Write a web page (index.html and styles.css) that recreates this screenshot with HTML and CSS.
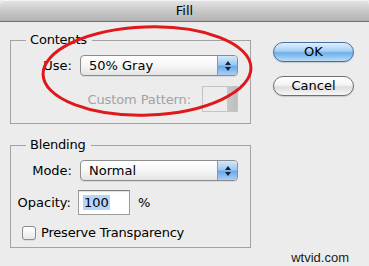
FILE: index.html
```html
<!DOCTYPE html>
<html>
<head>
<meta charset="utf-8">
<link rel="stylesheet" href="styles.css">
</head>
<body>
<div class="window">
  <div class="titlebar">Fill</div>
  <div class="content">
    <div class="groups">
      <fieldset class="group group-contents">
        <legend>Contents</legend>
        <div class="row">
          <span class="label">Use:</span>
          <div class="select"><span class="select-text">50% Gray</span><span class="select-arrows"><span class="up"></span><span class="down"></span></span></div>
        </div>
        <div class="row-pattern">
          <span class="disabled-label">Custom Pattern:</span>
          <div class="pattern-box"><span class="pattern-arrow"></span></div>
        </div>
      </fieldset>
      <fieldset class="group group-blending">
        <legend>Blending</legend>
        <div class="row">
          <span class="label">Mode:</span>
          <div class="select"><span class="select-text">Normal</span><span class="select-arrows"><span class="up"></span><span class="down"></span></span></div>
        </div>
        <div class="row row-opacity">
          <span class="label">Opacity:</span>
          <div class="input"><span class="selected">100</span></div>
          <span class="unit">%</span>
        </div>
        <div class="row-check">
          <span class="checkbox"></span>
          <span class="check-label">Preserve Transparency</span>
        </div>
      </fieldset>
    </div>
    <div class="buttons">
      <div class="btn btn-default">OK</div>
      <div class="btn">Cancel</div>
    </div>
  </div>
  <svg class="annotation" width="369" height="266" viewBox="0 0 369 266">
    <ellipse cx="147" cy="71" rx="104" ry="44" fill="none" stroke="#e0171b" stroke-width="3" transform="rotate(-2 147 71)"/>
  </svg>
  <div class="watermark">wtvid.com</div>
</div>
</body>
</html>
```

FILE: styles.css
```css
* { box-sizing: border-box; }
html, body {
  margin: 0;
  padding: 0;
  background: #ececec;
}
body {
  font-family: "DejaVu Sans", "Liberation Sans", sans-serif;
  font-size: 12px;
  color: #000;
}
.window {
  position: relative;
  width: 369px;
  height: 266px;
  overflow: hidden;
  background: #ececec;
}
.titlebar {
  height: 22px;
  line-height: 22px;
  text-align: center;
  font-size: 13px;
  background: linear-gradient(#e6e6e6, #c9c9c9 50%, #b4b4b4);
  border-bottom: 1px solid #6e6e6e;
  border-radius: 4px 4px 0 0;
  box-shadow: inset 0 1px 0 #f4f4f4;
}
.content {
  display: flex;
  padding: 10px 0 0 10px;
}
.groups {
  display: flex;
  flex-direction: column;
  gap: 13px;
  width: 241px;
}
.group {
  margin: 0;
  min-width: 0;
  border: 1px solid #a3a3a3;
  padding: 0 12px 0 0;
}
.group legend {
  margin-left: 15px;
  padding: 0 5px 0 4px;
  font-size: 13px;
  line-height: 16px;
  letter-spacing: -0.2px;
}
.group-contents { height: 92px; }
.group-blending { height: 111px; }
.row {
  display: grid;
  grid-template-columns: 61px 158px;
  column-gap: 8px;
  align-items: center;
}
.group-contents .row { margin-top: 7px; }
.group-blending .row { margin-top: 7px; }
.label {
  text-align: right;
  font-size: 13px;
}
.select {
  display: flex;
  height: 21px;
  border: 1px solid #8c8c8c;
  border-radius: 4px;
  background: linear-gradient(#ffffff, #f6f6f6 50%, #e4e4e4);
  overflow: hidden;
  box-shadow: 0 1px 0 rgba(0,0,0,0.08);
}
.select-text {
  flex: 1;
  padding-left: 8px;
  line-height: 19px;
  font-size: 13px;
}
.select-arrows {
  width: 20px;
  display: flex;
  flex-direction: column;
  align-items: center;
  justify-content: center;
  gap: 2px;
  border-left: 1px solid #7f99bd;
  background: linear-gradient(#d4e8fb, #9fc8f2 45%, #6fa9e6 55%, #a6d0f6);
}
.up, .down {
  width: 0;
  height: 0;
  border-left: 3px solid transparent;
  border-right: 3px solid transparent;
}
.up { border-bottom: 4px solid #15233a; }
.down { border-top: 4px solid #15233a; }
.row-pattern {
  display: flex;
  justify-content: flex-end;
  align-items: center;
  gap: 11px;
  margin-top: 10px;
}
.disabled-label {
  color: #a2a2a2;
  font-size: 13px;
  letter-spacing: -0.1px;
}
.pattern-box {
  position: relative;
  width: 36px;
  height: 26px;
  border: 1px solid #c4c4c4;
  background: #ececec;
  display: flex;
  justify-content: flex-end;
}
.pattern-arrow {
  width: 10px;
  height: 100%;
  background: linear-gradient(90deg, #c9c9c9, #bdbdbd);
  position: relative;
}
.pattern-arrow::after {
  content: "";
  position: absolute;
  left: 3px;
  top: 5px;
  border-left: 2px solid transparent;
  border-right: 2px solid transparent;
  border-top: 5px solid #e2e2e2;
}
.row-opacity {
  grid-template-columns: 60px 52px auto;
  column-gap: 7px;
  margin-top: 9px !important;
}
.input {
  height: 25px;
  border: 1px solid #9c9c9c;
  border-top-color: #7c7c7c;
  background: #fff;
  padding: 3px 0 0 4px;
  font-size: 13px;
  line-height: 17px;
  box-shadow: inset 0 1px 1px rgba(0,0,0,0.12);
}
.selected {
  background: #b5d5fb;
  padding: 0 1px;
}
.unit {
  margin-left: 1px;
  font-size: 13px;
}
.row-check {
  display: flex;
  align-items: center;
  gap: 5px;
  margin: 10px 0 0 11px;
}
.checkbox {
  width: 14px;
  height: 14px;
  border: 1px solid #8a8a8a;
  border-radius: 3px;
  background: linear-gradient(#ffffff, #e8e8e8);
  box-shadow: 0 1px 0 rgba(0,0,0,0.08);
}
.check-label {
  font-size: 13px;
  letter-spacing: -0.2px;
}
.buttons {
  display: flex;
  flex-direction: column;
  gap: 14px;
  margin: 10px 0 0 22px;
}
.btn {
  width: 81px;
  height: 20px;
  border: 1px solid #6f6f6f;
  border-radius: 10px;
  text-align: center;
  line-height: 18px;
  font-size: 13px;
  background: linear-gradient(#ffffff, #f4f4f4 45%, #dedede 55%, #f6f6f6);
  box-shadow: 0 1px 1px rgba(0,0,0,0.15);
}
.btn-default {
  border-color: #4b6e9e;
  background: linear-gradient(#e0f0fd, #a4cff5 45%, #6eaeea 55%, #b8ddfa);
}
.annotation {
  position: absolute;
  left: 0;
  top: 0;
  pointer-events: none;
}
.watermark {
  position: absolute;
  right: 20px;
  bottom: 1px;
  font-family: "Liberation Sans", Arial, sans-serif;
  font-size: 13px;
  color: #1a1a1a;
}
```
